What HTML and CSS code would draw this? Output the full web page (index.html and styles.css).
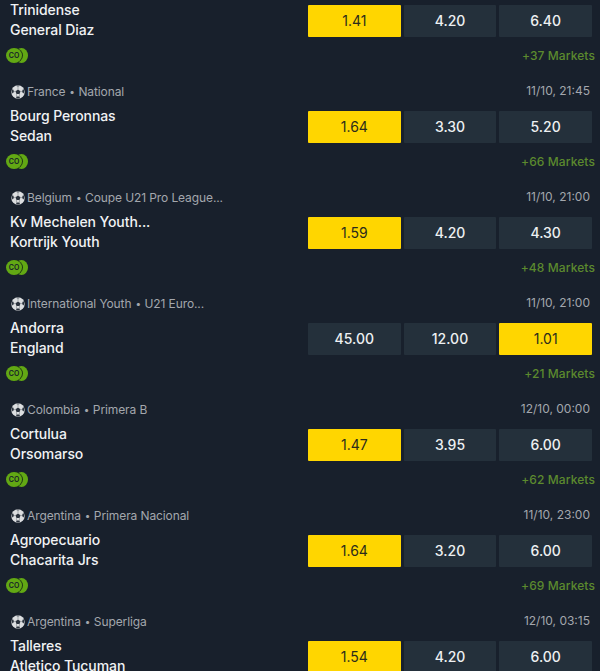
FILE: index.html
```html
<!DOCTYPE html>
<html lang="en">
<head>
<meta charset="utf-8">
<title>Matches</title>
<link rel="stylesheet" href="styles.css">
</head>
<body>
<svg class="defs" width="0" height="0" aria-hidden="true">
  <symbol id="ball" viewBox="0 0 14 14">
    <circle cx="7" cy="7" r="6.7" fill="#dcdee0"/>
    <path d="M7 4.4 9.5 6.2 8.5 9.1H5.5L4.5 6.2Z" fill="#2a323d"/>
    <path d="M5.4 .9 7 1.6 8.6 .9 7 .5ZM1.2 4.3 2.4 4.8 2.9 6.8 1.8 8.4 .8 7.2ZM12.8 4.3 11.6 4.8 11.1 6.8 12.2 8.4 13.2 7.2ZM5.1 12.9 5.6 11.6H8.4L8.9 12.9 7 13.4Z" fill="#2a323d"/>
    <path d="M7 1.6V4.4M4.5 6.2 2.9 6.8M9.5 6.2 11.1 6.8M5.5 9.1 5.6 11.6M8.5 9.1 8.4 11.6" stroke="#6b7178" stroke-width=".5"/>
  </symbol>
</svg>
<main class="list">

<section class="match">
  <div class="info"><div class="meta"></div><div class="teams"><span>Trinidense</span><span>General Diaz</span></div></div>
  <div class="side"><div class="time"></div><div class="odds"><button class="odd sel">1.41</button><button class="odd">4.20</button><button class="odd">6.40</button></div></div>
  <div class="foot"><span class="coins"><i class="coin back"></i><i class="coin front">CO</i></span><a class="more">+37 Markets</a></div>
</section>

<section class="match">
  <div class="info"><div class="meta"><svg class="ball"><use href="#ball"/></svg><span>France</span><b>•</b><span>National</span></div><div class="teams"><span>Bourg Peronnas</span><span>Sedan</span></div></div>
  <div class="side"><div class="time">11/10, 21:45</div><div class="odds"><button class="odd sel">1.64</button><button class="odd">3.30</button><button class="odd">5.20</button></div></div>
  <div class="foot"><span class="coins"><i class="coin back"></i><i class="coin front">CO</i></span><a class="more">+66 Markets</a></div>
</section>

<section class="match">
  <div class="info"><div class="meta"><svg class="ball"><use href="#ball"/></svg><span>Belgium</span><b>•</b><span>Coupe U21 Pro League...</span></div><div class="teams"><span>Kv Mechelen Youth...</span><span>Kortrijk Youth</span></div></div>
  <div class="side"><div class="time">11/10, 21:00</div><div class="odds"><button class="odd sel">1.59</button><button class="odd">4.20</button><button class="odd">4.30</button></div></div>
  <div class="foot"><span class="coins"><i class="coin back"></i><i class="coin front">CO</i></span><a class="more">+48 Markets</a></div>
</section>

<section class="match">
  <div class="info"><div class="meta"><svg class="ball"><use href="#ball"/></svg><span>International Youth</span><b>•</b><span>U21 Euro...</span></div><div class="teams"><span>Andorra</span><span>England</span></div></div>
  <div class="side"><div class="time">11/10, 21:00</div><div class="odds"><button class="odd">45.00</button><button class="odd">12.00</button><button class="odd sel">1.01</button></div></div>
  <div class="foot"><span class="coins"><i class="coin back"></i><i class="coin front">CO</i></span><a class="more">+21 Markets</a></div>
</section>

<section class="match">
  <div class="info"><div class="meta"><svg class="ball"><use href="#ball"/></svg><span>Colombia</span><b>•</b><span>Primera B</span></div><div class="teams"><span>Cortulua</span><span>Orsomarso</span></div></div>
  <div class="side"><div class="time">12/10, 00:00</div><div class="odds"><button class="odd sel">1.47</button><button class="odd">3.95</button><button class="odd">6.00</button></div></div>
  <div class="foot"><span class="coins"><i class="coin back"></i><i class="coin front">CO</i></span><a class="more">+62 Markets</a></div>
</section>

<section class="match">
  <div class="info"><div class="meta"><svg class="ball"><use href="#ball"/></svg><span>Argentina</span><b>•</b><span>Primera Nacional</span></div><div class="teams"><span>Agropecuario</span><span>Chacarita Jrs</span></div></div>
  <div class="side"><div class="time">11/10, 23:00</div><div class="odds"><button class="odd sel">1.64</button><button class="odd">3.20</button><button class="odd">6.00</button></div></div>
  <div class="foot"><span class="coins"><i class="coin back"></i><i class="coin front">CO</i></span><a class="more">+69 Markets</a></div>
</section>

<section class="match">
  <div class="info"><div class="meta"><svg class="ball"><use href="#ball"/></svg><span>Argentina</span><b>•</b><span>Superliga</span></div><div class="teams"><span>Talleres</span><span>Atletico Tucuman</span></div></div>
  <div class="side"><div class="time">12/10, 03:15</div><div class="odds"><button class="odd sel">1.54</button><button class="odd">4.20</button><button class="odd">6.00</button></div></div>
</section>

</main>
</body>
</html>
```
FILE: styles.css
```css
* { box-sizing: border-box; }
html, body { margin: 0; height: 100%; overflow: hidden; background: #18202c; }
body { font-family: Inter, "Liberation Sans", sans-serif; }
.defs { position: absolute; }
.list { margin-top: -30px; }
.match {
  height: 106px;
  display: grid;
  grid-template-columns: 1fr 287px;
  grid-template-rows: 74px 32px;
  padding: 0 5px 0 10px;
}
.info { display: flex; flex-direction: column; }
.meta {
  height: 30px;
  display: flex;
  align-items: center;
  gap: 4px;
  font-size: 12px;
  letter-spacing: -0.1px;
  color: #a3a7ad;
  white-space: nowrap;
}
.meta b { font-weight: 400; font-size: 10px; margin-right: -0.5px; }
.ball { width: 14px; height: 14px; margin: 1px -2px 0 1px; }
.teams {
  display: flex;
  flex-direction: column;
  font-size: 14px;
  line-height: 20px;
  font-weight: 500;
  letter-spacing: -0.08px;
  color: #f0f2f4;
  white-space: nowrap;
}
.side { display: flex; flex-direction: column; }
.time {
  height: 35px;
  font-size: 12px;
  line-height: 30px;
  color: #a3a7ad;
  text-align: right;
  padding-right: 5px;
}
.odds { display: flex; gap: 3px; margin-right: 3px; }
.odd {
  flex: 1 1 0;
  height: 32px;
  border: 0;
  border-radius: 1px;
  background: #24303b;
  color: #eef0f2;
  font: 500 14px Inter, "Liberation Sans", sans-serif;
  padding: 0 0 2px;
}
.odd.sel { background: #ffd600; color: #2b2b1c; font-weight: 400; }
.foot {
  grid-column: 1 / -1;
  display: flex;
  align-items: center;
  justify-content: space-between;
  height: 22px;
  margin-left: -4px;
}
.coins { position: relative; display: block; width: 22px; height: 15px; margin-top: 1px; }
.coin { position: absolute; top: 0; height: 15px; border-radius: 50%; background: #62a814; }
.coin.back { left: 9px; width: 13px; }
.coin.front {
  left: 0;
  width: 16px;
  box-shadow: 1px 0 0 #1f3a14;
  color: #16202a;
  font-size: 7px;
  line-height: 15px;
  font-style: normal;
  font-weight: 600;
  text-align: center;
}
.more { font-size: 12px; font-weight: 500; color: #5c8a2e; letter-spacing: 0.1px; }
```
